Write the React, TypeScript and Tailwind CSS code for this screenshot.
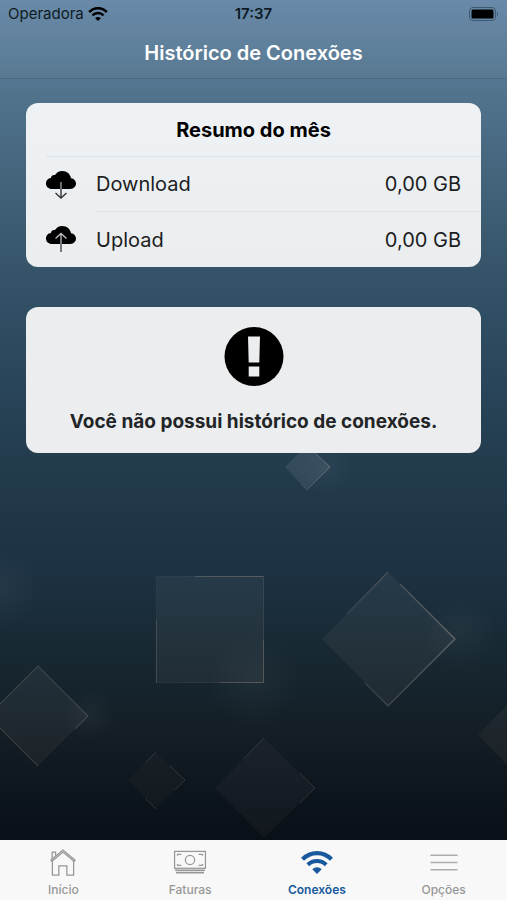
import type { ReactNode } from "react";

const CLOUD =
  "M6 18C2.600 18 0 15.700 0 12.500C0 9.600 2.100 7.400 4.900 7.100C5.100 4.900 7 3.600 9 4.100C10.400 1.600 13 0 16.200 0C20.900 0 24.500 3.200 25 7.300C28 7.700 30 9.900 30 12.600C30 15.700 27.500 18 24.400 18Z";

function CloudIcon({ up = false }: { up?: boolean }) {
  return (
    <svg aria-hidden="true" className="h-7 w-[30px] shrink-0" viewBox="0 0 30 28" fill="none">
      <path d={CLOUD} fill="#000" />
      {up ? (
        <>
          <path d="M15 8V18M9.500 12.500L15 7.500L20.500 12.500" stroke="#b9bcbe" strokeWidth="1.300" />
          <path d="M15 18V26" stroke="#44474a" strokeWidth="1.400" />
        </>
      ) : (
        <>
          <path d="M15 11V18" stroke="#a5a8aa" strokeWidth="1.300" />
          <path d="M15 18V27M9.500 22L15 27L20.500 22" stroke="#33363a" strokeWidth="1.400" />
        </>
      )}
    </svg>
  );
}

function WifiIcon({ className }: { className: string }) {
  return (
    <svg aria-hidden="true" className={className} viewBox="0 0 32 23" fill="none">
      <path d="M1.500 8.300C9.500 0 22.500 0 30.500 8.300" stroke="currentColor" strokeWidth="4.200" />
      <path d="M6.800 13.800C12 8.700 20 8.700 25.200 13.800" stroke="currentColor" strokeWidth="4" />
      <path d="M16 23L11.300 18.300C14 15.600 18 15.600 20.700 18.300Z" fill="currentColor" />
    </svg>
  );
}

function HomeIcon() {
  return (
    <svg aria-hidden="true" className="h-7 w-7" viewBox="0 0 28 28" fill="none" stroke="currentColor" strokeWidth="1.300">
      <path d="M1.500 11.500L14 1L26.500 11.500L25.500 12.700L14 3.200L2.500 12.700Z" />
      <path d="M2.700 10V3.200H6.300V7" />
      <path d="M3 12.500V27H9.700V17.500H18V27H25V12.500" />
    </svg>
  );
}

function MoneyIcon() {
  return (
    <svg aria-hidden="true" className="h-7 w-[34px]" viewBox="0 0 34 28" fill="none" stroke="currentColor" strokeWidth="1.300">
      <rect x="1" y="2.500" width="32" height="17.500" />
      <circle cx="17" cy="11.300" r="4.800" />
      <path d="M4 5.500H8M4 5.500V7M26 5.500H30M30 5.500V7M4 17H8M4 17V15.500M26 17H30M30 17V15.500" />
      <path d="M1.500 22H32.500M2.500 24.500H31.500" strokeWidth="1.600" />
    </svg>
  );
}

function MenuIcon() {
  return (
    <svg aria-hidden="true" className="h-7 w-7" viewBox="0 0 28 28" fill="none" stroke="#ababab" strokeWidth="1.600">
      <path d="M0 6.500H28M0 14H28M0 21.500H28" />
    </svg>
  );
}

function Backdrop() {
  return (
    <svg
      aria-hidden="true"
      className="absolute inset-0 h-full w-full"
      viewBox="0 0 507 900"
      preserveAspectRatio="xMidYMid slice"
      fill="none"
    >
      <defs>
        <linearGradient id="sky" x1="0" y1="0" x2="0" y2="900" gradientUnits="userSpaceOnUse">
          <stop offset="0" stopColor="#678baa" />
          <stop offset="0.110" stopColor="#50728b" />
          <stop offset="0.300" stopColor="#355469" />
          <stop offset="0.400" stopColor="#2b485d" />
          <stop offset="0.510" stopColor="#233c4e" />
          <stop offset="0.630" stopColor="#1d3243" />
          <stop offset="0.720" stopColor="#182933" />
          <stop offset="0.820" stopColor="#131d24" />
          <stop offset="0.930" stopColor="#091017" />
        </linearGradient>
        <radialGradient id="glow">
          <stop stopColor="#a4b0bc" stopOpacity="0.060" />
          <stop offset="1" stopColor="#a4b0bc" stopOpacity="0" />
        </radialGradient>
        <linearGradient id="edge" x1="0" y1="0" x2="1" y2="0">
          <stop stopColor="#a99c94" stopOpacity="0.150" />
          <stop offset="1" stopColor="#a99c94" stopOpacity="0.500" />
        </linearGradient>
        <linearGradient id="edgeDim" x1="0" y1="0" x2="1" y2="0">
          <stop stopColor="#a99c94" stopOpacity="0.080" />
          <stop offset="1" stopColor="#a99c94" stopOpacity="0.180" />
        </linearGradient>
        <linearGradient id="pane" x1="0" y1="0" x2="0" y2="1">
          <stop stopColor="#b0b6b8" stopOpacity="0.070" />
          <stop offset="1" stopColor="#b09c98" stopOpacity="0.070" />
        </linearGradient>
      </defs>
      <rect width="507" height="900" fill="url(#sky)" />
      <circle cx="0" cy="590" r="40" fill="url(#glow)" />
      <circle cx="254" cy="682" r="46" fill="url(#glow)" />
      <circle cx="460" cy="632" r="38" fill="url(#glow)" />
      <circle cx="90" cy="714" r="26" fill="url(#glow)" />
      <circle cx="326" cy="469" r="26" fill="url(#glow)" />
      <path d="M307 445L330 467L307 490L285 467Z" fill="#9cabb5" fillOpacity="0.150" />
      <path d="M313 451L330 467L307 490L301 484" stroke="url(#edge)" />
      <path d="M156.500 576.500H263.500V682.500H156.500Z" fill="url(#pane)" stroke="url(#edgeDim)" />
      <path d="M195 576.500H263.500M263.500 640V682.500H220M156.500 620V682.500" stroke="#a99c94" strokeOpacity="0.240" />
      <path d="M388 572L455 639L388 706L322 639Z" fill="url(#pane)" />
      <path d="M347 614L388 572M400 584L455 639L388 706L365 683" stroke="url(#edge)" strokeWidth="1.200" />
      <path d="M38 666L88 716L38 766L-12 716Z" fill="url(#pane)" />
      <path d="M0 704L38 666L88 716L75 729M0 728L38 766" stroke="#a99c94" strokeOpacity="0.240" strokeWidth="1.200" />
      <path d="M156 752L185 780L156 809L128 780Z" fill="#a99c94" fillOpacity="0.040" />
      <path d="M145 763L156 752M170 766L185 780L175 790M156 809L145 798" stroke="#a99c94" strokeOpacity="0.200" />
      <path d="M264 738L315 788L264 838L215 788Z" fill="#a99c94" fillOpacity="0.050" />
      <path d="M243 759L264 738M300 773L315 788L300 803" stroke="#a99c94" strokeOpacity="0.200" />
      <path d="M507 705L478 735L507 765Z" fill="#a99c94" fillOpacity="0.070" />
    </svg>
  );
}

function UsageRow({ up, label, value, divided }: { up?: boolean; label: string; value: string; divided?: boolean }) {
  return (
    <div className="flex h-[55px] items-center gap-5 pl-5">
      <CloudIcon up={up} />
      <div
        className={`flex h-full flex-1 items-center justify-between pr-5 text-xl text-[#1c1d1f] ${
          divided ? "border-b border-[#dfe3e6]" : ""
        }`}
      >
        <dt>{label}</dt>
        <dd>{value}</dd>
      </div>
    </div>
  );
}

function Tab({ label, active, children }: { label: string; active?: boolean; children: ReactNode }) {
  return (
    <a
      href="#"
      aria-current={active ? "page" : undefined}
      className={`flex flex-1 flex-col items-center gap-1 pt-[9px] text-xs leading-5 ${
        active ? "font-semibold text-[#185a9d]" : "font-medium text-[#979797]"
      }`}
    >
      {children}
      <span>{label}</span>
    </a>
  );
}

export default function App() {
  return (
    <div className="relative flex min-h-screen flex-col overflow-hidden font-['Inter',sans-serif]">
      <Backdrop />
      <header className="relative border-b border-[#486a83] bg-[#7d8c99]/10">
        <div className="grid h-7 grid-cols-3 items-center px-2 text-[15px] text-[#0e1a24]">
          <div className="flex items-center gap-1">
            <span>Operadora</span>
            <WifiIcon className="h-[14px] w-5 text-black" />
          </div>
          <span className="text-center font-semibold">17:37</span>
          <svg aria-hidden="true" className="h-[14px] w-[30px] justify-self-end" viewBox="0 0 30 14" fill="none">
            <rect x="0.500" y="0.500" width="26" height="13" rx="3.500" stroke="#3f5a70" />
            <rect x="2.500" y="2.500" width="22" height="9" rx="1.500" fill="#000" />
            <path d="M28 5V9C29.300 8.600 29.300 5.400 28 5Z" fill="#3f5a70" />
          </svg>
        </div>
        <h1 className="flex h-[50px] items-center justify-center text-xl font-semibold text-white">
          Histórico de Conexões
        </h1>
      </header>
      <main className="relative flex flex-1 flex-col gap-10 px-[26px] py-6">
        <section className="rounded-xl bg-linear-to-b from-[#eef2f5] to-[#ebedee]">
          <h2 className="ml-5 flex h-[54px] items-center justify-center border-b border-[#dde3e7] pr-5 text-xl font-bold text-black">
            Resumo do mês
          </h2>
          <dl>
            <UsageRow label="Download" value="0,00 GB" divided />
            <UsageRow up label="Upload" value="0,00 GB" />
          </dl>
        </section>
        <section className="flex flex-col items-center gap-5 rounded-xl bg-[#ebedee] px-5 pt-5 pb-4">
          <svg aria-hidden="true" className="h-[60px] w-[60px]" viewBox="0 0 60 60">
            <circle cx="30" cy="29.500" r="29.500" fill="#000" />
            <path d="M24 9.500H36L35.300 35.500H24.700ZM24.700 39.500H35.300V49.500H24.700Z" fill="#ebedee" />
          </svg>
          <p className="text-center text-[19px] leading-[30px] font-bold text-[#222426]">
            Você não possui histórico de conexões.
          </p>
        </section>
      </main>
      <nav className="relative flex h-[60px] bg-[#f8f8f8]">
        <Tab label="Início">
          <HomeIcon />
        </Tab>
        <Tab label="Faturas">
          <MoneyIcon />
        </Tab>
        <Tab label="Conexões" active>
          <WifiIcon className="h-7 w-8" />
        </Tab>
        <Tab label="Opções">
          <MenuIcon />
        </Tab>
      </nav>
    </div>
  );
}
